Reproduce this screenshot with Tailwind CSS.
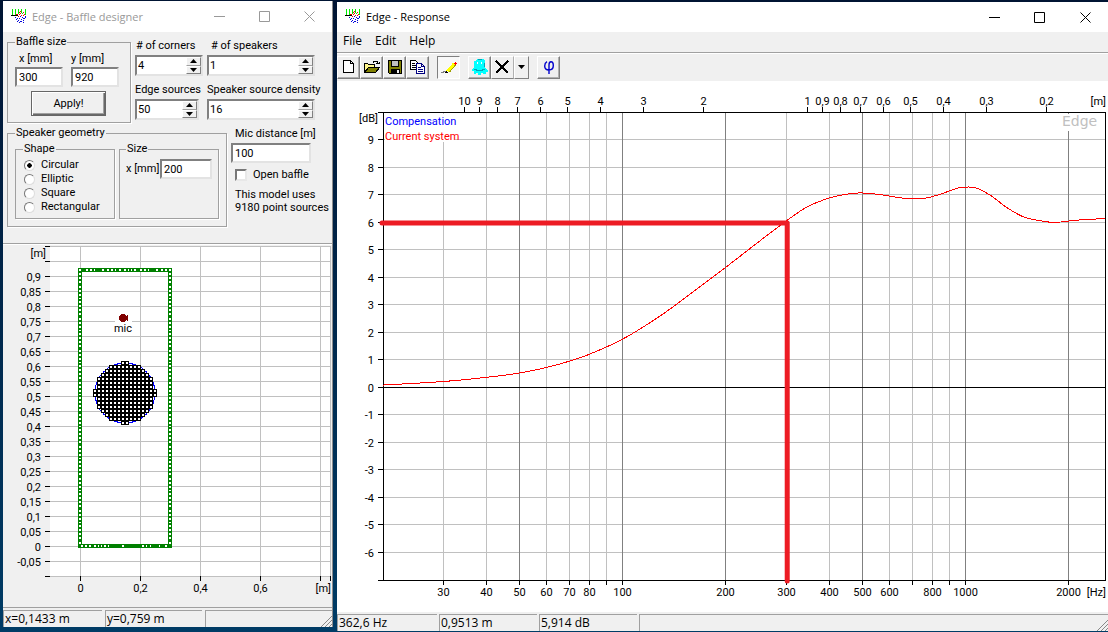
<!DOCTYPE html>
<html lang="en">
<head>
    <meta charset="UTF-8">
    <meta name="viewport" content="width=device-width, initial-scale=1.0">
    <title>Edge</title>
    <script src="https://cdn.jsdelivr.net/npm/@tailwindcss/browser@4"></script>
</head>
<body class="min-h-screen flex gap-1 pl-[3px] bg-linear-to-b from-[#001433] to-[#003c66] font-[Roboto,'Liberation_Sans',sans-serif] text-[11px] leading-[14px] text-black">

    <!-- Baffle designer -->
    <section class="w-[330px] shrink-0 mt-px mb-[5px] flex flex-col bg-[#f0f0f0] border-r border-[#8c8c8c]">
        <header class="h-[31px] flex items-center bg-white text-[#999] pl-2">
            <svg class="app-icon w-4 h-4" viewBox="0 0 16 16" shape-rendering="crispEdges"></svg>
            <h1 class="ml-[5px] flex-1 font-['Open_Sans',sans-serif] text-[11px] leading-4">Edge - Baffle designer</h1>
            <button aria-label="Minimize" class="w-[45px] h-7 flex items-center justify-center"><svg class="w-[11px] h-[11px]" viewBox="0 0 11 11" stroke="currentColor" fill="none"><path d="M0 5.5h11"/></svg></button>
            <button aria-label="Maximize" class="w-[45px] h-7 flex items-center justify-center"><svg class="w-[11px] h-[11px]" viewBox="0 0 11 11" stroke="currentColor" fill="none"><path d="M.5.5h10v10H.5z"/></svg></button>
            <button aria-label="Close" class="w-[45px] h-7 flex items-center justify-center"><svg class="w-[11px] h-[11px]" viewBox="0 0 11 11" stroke="currentColor" fill="none"><path d="M.5.5l10 10M10.5.5l-10 10"/></svg></button>
        </header>

        <form class="pl-1 pb-4 border-b border-[#a0a0a0]" onsubmit="return false">
            <div class="flex">
                <fieldset class="w-[124px] h-[88px] mt-[3px] pl-[7px] border border-[#a0a0a0] shadow-[1px_1px_0_#fff]">
                    <legend class="bg-[#f0f0f0] px-px">Baffle size</legend>
                    <div class="flex gap-2 mt-[3px]">
                        <div class="w-12"><label for="bx" class="block pl-1">x [mm]</label><input id="bx" value="300" class="block w-12 h-5 mt-px px-0.5 bg-white border-2 border-t-[#808080] border-l-[#808080] border-b-[#e3e3e3] border-r-[#e3e3e3]"></div>
                        <div class="w-12"><label for="by" class="block">y [mm]</label><input id="by" value="920" class="block w-12 h-5 mt-px px-0.5 bg-white border-2 border-t-[#808080] border-l-[#808080] border-b-[#e3e3e3] border-r-[#e3e3e3]"></div>
                    </div>
                    <button class="block w-[75px] h-[25px] mt-1 ml-4 text-center border border-[#666] shadow-[inset_1px_1px_0_#fff,inset_-1px_-1px_0_#696969,inset_-2px_-2px_0_#a0a0a0]">Apply!</button>
                </fieldset>
                <div class="ml-1 mt-[7px] w-[72px]">
                    <label for="corners" class="block pl-px whitespace-nowrap"># of corners</label>
                    <div class="flex w-[68px] h-[21px] mt-0.5 bg-white border-2 border-t-[#808080] border-l-[#808080] border-b-[#e3e3e3] border-r-[#e3e3e3]">
                        <input id="corners" value="4" class="flex-1 min-w-0 h-4 pl-px">
                        <span class="spin w-[15px] flex flex-col"></span>
                    </div>
                    <label for="sources" class="block mt-[7px] whitespace-nowrap">Edge sources</label>
                    <div class="flex w-16 h-[21px] mt-0.5 bg-white border-2 border-t-[#808080] border-l-[#808080] border-b-[#e3e3e3] border-r-[#e3e3e3]">
                        <input id="sources" value="50" class="flex-1 min-w-0 h-4 pl-px">
                        <span class="spin w-[15px] flex flex-col"></span>
                    </div>
                </div>
                <div class="mt-[7px]">
                    <label for="speakers" class="block pl-1 whitespace-nowrap"># of speakers</label>
                    <div class="flex w-[108px] h-[21px] mt-0.5 bg-white border-2 border-t-[#808080] border-l-[#808080] border-b-[#e3e3e3] border-r-[#e3e3e3]">
                        <input id="speakers" value="1" class="flex-1 min-w-0 h-4 pl-px">
                        <span class="spin w-[15px] flex flex-col"></span>
                    </div>
                    <label for="density" class="block mt-[7px] whitespace-nowrap">Speaker source density</label>
                    <div class="flex w-[108px] h-[21px] mt-0.5 bg-white border-2 border-t-[#808080] border-l-[#808080] border-b-[#e3e3e3] border-r-[#e3e3e3]">
                        <input id="density" value="16" class="flex-1 min-w-0 h-4 pl-px">
                        <span class="spin w-[15px] flex flex-col"></span>
                    </div>
                </div>
            </div>

            <div class="flex mt-[3px]">
                <fieldset class="w-[220px] h-[101px] pl-[7px] border border-[#a0a0a0] shadow-[1px_1px_0_#fff]">
                    <legend class="bg-[#f0f0f0] px-px">Speaker geometry</legend>
                    <div class="flex gap-1 mt-0.5">
                        <fieldset class="w-[100px] h-[77px] pl-2 border border-[#a0a0a0] shadow-[1px_1px_0_#fff]">
                            <legend class="bg-[#f0f0f0] px-px -ml-px">Shape</legend>
                            <label class="flex items-center h-3.5 mt-0.5"><input type="radio" name="shape" checked class="appearance-none w-[11px] h-[11px] mr-1.5 rounded-full bg-white border border-t-[#777] border-l-[#777] border-b-[#ddd] border-r-[#ddd] checked:bg-[radial-gradient(#000_2px,#fff_2.5px)]">Circular</label>
                            <label class="flex items-center h-3.5"><input type="radio" name="shape" class="appearance-none w-[11px] h-[11px] mr-1.5 rounded-full bg-white border border-t-[#777] border-l-[#777] border-b-[#ddd] border-r-[#ddd]">Elliptic</label>
                            <label class="flex items-center h-3.5"><input type="radio" name="shape" class="appearance-none w-[11px] h-[11px] mr-1.5 rounded-full bg-white border border-t-[#777] border-l-[#777] border-b-[#ddd] border-r-[#ddd]">Square</label>
                            <label class="flex items-center h-3.5"><input type="radio" name="shape" class="appearance-none w-[11px] h-[11px] mr-1.5 rounded-full bg-white border border-t-[#777] border-l-[#777] border-b-[#ddd] border-r-[#ddd]">Rectangular</label>
                        </fieldset>
                        <fieldset class="w-[100px] h-[77px] pl-1.5 border border-[#a0a0a0] shadow-[1px_1px_0_#fff]">
                            <legend class="bg-[#f0f0f0] px-px">Size</legend>
                            <div class="flex items-center mt-[3px]">
                                <label for="size" class="w-[34px] whitespace-nowrap">x [mm]</label>
                                <input id="size" value="200" class="w-[52px] h-5 px-0.5 bg-white border-2 border-t-[#808080] border-l-[#808080] border-b-[#e3e3e3] border-r-[#e3e3e3]">
                            </div>
                        </fieldset>
                    </div>
                </fieldset>
                <div class="ml-1 mt-px">
                    <label for="mic" class="block pl-1 whitespace-nowrap">Mic distance [m]</label>
                    <input id="mic" value="100" class="block w-20 h-5 mt-0.5 px-0.5 bg-white border-2 border-t-[#808080] border-l-[#808080] border-b-[#e3e3e3] border-r-[#e3e3e3]">
                    <label class="flex items-center h-3.5 mt-[5px] pl-1"><input type="checkbox" class="appearance-none w-3 h-3 mr-1.5 bg-white border-2 border-t-[#777] border-l-[#777] border-b-[#e8e8e8] border-r-[#e8e8e8]">Open baffle</label>
                    <p class="mt-1.5 pl-1 leading-[13px] whitespace-nowrap">This model uses<br>9180 point sources</p>
                </div>
            </div>
        </form>

        <div class="flex-1 min-h-[360px] border-t border-white overflow-hidden">
            <svg id="baffle" class="block w-full h-[361px]" font-size="11" shape-rendering="crispEdges"></svg>
        </div>

        <footer class="h-5 flex gap-[3px] pt-0.5 border-t border-[#a0a0a0] font-['Open_Sans',sans-serif] text-xs leading-[15px]">
            <span class="w-[99px] pl-px border-t border-l border-[#a0a0a0]">x=0,1433 m</span>
            <span class="w-[97px] pl-px border-t border-l border-[#a0a0a0]">y=0,759 m</span>
            <span class="flex-1 flex justify-end items-end border-t border-l border-[#a0a0a0]"><svg class="w-3 h-3" viewBox="0 0 12 12" stroke="#888"><path d="M1 12L12 1M5 12l7-7M9 12l3-3"/></svg></span>
        </footer>
    </section>

    <!-- Response -->
    <section class="flex-1 min-w-0 mt-0.5 mb-px flex flex-col bg-[#f0f0f0]">
        <header class="h-[30px] flex items-center bg-white pl-2">
            <svg class="app-icon w-4 h-4" viewBox="0 0 16 16" shape-rendering="crispEdges"></svg>
            <h1 class="ml-[5px] flex-1 font-['Open_Sans',sans-serif] text-[11px] leading-4">Edge - Response</h1>
            <button aria-label="Minimize" class="w-[45px] h-7 flex items-center justify-center"><svg class="w-[11px] h-[11px]" viewBox="0 0 11 11" stroke="currentColor" fill="none"><path d="M0 5.5h11"/></svg></button>
            <button aria-label="Maximize" class="w-[45px] h-7 flex items-center justify-center"><svg class="w-[11px] h-[11px]" viewBox="0 0 11 11" stroke="currentColor" fill="none"><path d="M.5.5h10v10H.5z"/></svg></button>
            <button aria-label="Close" class="w-[46px] h-7 flex items-center justify-center"><svg class="w-[11px] h-[11px]" viewBox="0 0 11 11" stroke="currentColor" fill="none"><path d="M.5.5l10 10M10.5.5l-10 10"/></svg></button>
        </header>
        <nav class="h-[21px] flex items-center gap-[13px] pb-0.5 pl-1.5 border-b border-[#a0a0a0] font-['Open_Sans',sans-serif] text-xs leading-4">
            <button>File</button><button>Edit</button><button>Help</button>
        </nav>
        <div class="h-7 flex items-center pb-px border-t border-white">
            <button aria-label="New" class="w-[23px] h-[23px] flex items-center justify-center border border-t-white border-l-white border-b-[#808080] border-r-[#808080] shadow-[inset_-1px_-1px_0_#b0b0b0]">
                <svg class="w-4 h-4" viewBox="0 0 16 16" shape-rendering="crispEdges"><path fill="#fff" stroke="#000" d="M2.500 1.500h7l3 3v9h-10z"/><path fill="none" stroke="#000" d="M9.500 1.500v3h3"/></svg>
            </button>
            <button aria-label="Open" class="w-[23px] h-[23px] flex items-center justify-center border border-t-white border-l-white border-b-[#808080] border-r-[#808080] shadow-[inset_-1px_-1px_0_#b0b0b0]">
                <svg class="w-4 h-4" viewBox="0 0 16 16" shape-rendering="crispEdges"><path fill="#fff68a" stroke="#000" d="M.5 13.500v-9h3l1 1h6v3h-6z"/><path fill="#808000" stroke="#000" d="M.5 13.500l4-5h11l-4 5z"/><path fill="none" stroke="#000" d="M9 3.500l1-1h3l1.500 2M12 4.500h3v-2"/></svg>
            </button>
            <button aria-label="Save" class="w-[23px] h-[23px] flex items-center justify-center border border-t-white border-l-white border-b-[#808080] border-r-[#808080] shadow-[inset_-1px_-1px_0_#b0b0b0]">
                <svg class="w-4 h-4" viewBox="0 0 16 16" shape-rendering="crispEdges"><path fill="#808000" stroke="#000" d="M1.500 1.500h13v13h-12l-1-1z"/><path fill="#c0c0c0" stroke="#000" d="M4.500 1.500h7v6h-7z"/><path d="M4 10h9v4H4z"/><path fill="#f0f0f0" d="M10 11h2v3h-2z"/></svg>
            </button>
            <button aria-label="Copy" class="w-[23px] h-[23px] flex items-center justify-center border border-t-white border-l-white border-b-[#808080] border-r-[#808080] shadow-[inset_-1px_-1px_0_#b0b0b0]">
                <svg class="w-4 h-4" viewBox="0 0 16 16" shape-rendering="crispEdges" fill="#fff"><path stroke="#000" d="M.5 1.500h5l3 3v6h-8z"/><path stroke="#000" d="M2 4.500h3M2 6.500h4M2 8.500h4"/><path stroke="#000080" d="M6.500 4.500h5l3 3v7h-8zM11.500 4.500v3h3M8 8.500h3M8 10.500h5M8 12.500h5"/></svg>
            </button>
            <button aria-label="Draw" class="ml-2 w-[23px] h-[23px] flex items-center justify-center bg-[#f8f8f8] border border-t-[#808080] border-l-[#808080] border-b-white border-r-white">
                <svg class="w-[18px] h-4" viewBox="0 0 18 16" shape-rendering="crispEdges" fill="none"><path stroke="#808080" d="M1 13.500h2v-1h3"/><path stroke="#ff0" stroke-width="3" d="M7.500 12.500l7-8"/><path stroke="#a0a000" d="M9.500 13l6-7"/><path fill="#000" d="M5 13h3v1H5zM6 12h1v1H6z"/><path fill="red" d="M15 3h1v1h1v1h-1v1h-1V5h-1V4h1z"/></svg>
            </button>
            <button aria-label="Ghost" class="ml-2 w-[23px] h-[23px] flex items-center justify-center border border-t-white border-l-white border-b-[#808080] border-r-[#808080] shadow-[inset_-1px_-1px_0_#b0b0b0]">
                <svg class="w-[18px] h-[18px]" viewBox="0 0 18 18" shape-rendering="crispEdges"><path fill="#0ff" d="M6 1h6l2 2v7l3 2v2h-2v2h-3v-1h-2v2H7v-2H5v1H3v-3H1v-2l2-2V3h2z"/><path fill="#fff" d="M6 4h1v2H6zM10 4h1v2h-1z"/><path fill="none" stroke="#00a6b8" d="M3 11.500h2l1 1h5l1-1h2M7 1.500h4M13.500 5v4"/></svg>
            </button>
            <button aria-label="Delete" class="w-[23px] h-[23px] flex items-center justify-center border border-t-white border-l-white border-b-[#808080] border-r-[#b0b0b0]">
                <svg class="w-4 h-4" viewBox="0 0 16 16" shape-rendering="crispEdges" stroke="#000" fill="none"><path stroke-width="2" d="M1 2l12 12M13 2L1 14"/></svg>
            </button>
            <button aria-label="Delete options" class="w-[15px] h-[23px] flex items-center justify-center border border-t-white border-l-white border-b-[#808080] border-r-[#808080]">
                <svg class="w-[7px] h-1" viewBox="0 0 7 4"><path d="M0 0h7L3.500 4z"/></svg>
            </button>
            <button aria-label="Phase" class="ml-2 w-[23px] h-[23px] flex items-center justify-center border border-t-white border-l-white border-b-[#808080] border-r-[#808080] shadow-[inset_-1px_-1px_0_#b0b0b0]">
                <svg class="w-[10px] h-[13px]" viewBox="0 0 10 13" fill="none" stroke="#00c" stroke-width="1.400"><path d="M3 .7C1.500 1.500.7 3 .7 5c0 2.500 1.500 4 4.300 4s4.300-1.500 4.300-4.500C9.300 2 8.500.7 7 .7S5 2 5 4v9"/></svg>
            </button>
        </div>

        <div class="flex-1 min-h-[400px] bg-white overflow-hidden">
            <svg id="response" class="block w-full h-[531px]" font-size="11" shape-rendering="crispEdges"></svg>
        </div>

        <footer class="h-[19px] flex gap-0.5 pt-0.5 font-['Open_Sans',sans-serif] text-xs leading-4">
            <span class="w-[100px] pl-px border-t border-l border-[#a0a0a0]">362,6 Hz</span>
            <span class="w-[98px] pl-px border-t border-l border-[#a0a0a0]">0,9513 m</span>
            <span class="w-[98px] pl-px border-t border-l border-[#a0a0a0]">5,914 dB</span>
            <span class="flex-1 flex justify-end items-end border-t border-l border-[#a0a0a0]"><svg class="w-3 h-3" viewBox="0 0 12 12" stroke="#888"><path d="M1 12L12 1M5 12l7-7M9 12l3-3"/></svg></span>
        </footer>
    </section>

    <script>
        // Title bar icons
        document.querySelectorAll('.app-icon').forEach(icon => {
            icon.innerHTML = `
                <path fill="#0e0" d="M1 0h1v6H1zM4 0h1v6H4zM5 5h1v1H5zM7 0h1v5H7zM10 0h1v4h-1zM11 4h1v1h-1zM14 0h1v6h-1z"/>
                <path fill="#000" d="M0 6h7v1H0z"/>
                <path fill="#e00" d="M5 5h2v1H5zM8 3h1v1H8zM8 5h1v1H8zM9 2h1v1H9zM9 4h1v1H9zM12 3h1v1h-1zM10 6h1v1h-1zM13 5h1v1h-1zM7 7h1v1H7zM12 6h1v1h-1z"/>
                <path fill="#00d" d="M4 8h1v1H4zM6 9h1v1H6zM5 10h1v1H5zM8 9h1v1H8zM7 11h1v1H7zM9 12h2v1H9zM8 13h1v1H8zM10 10h1v1h-1zM12 11h1v1h-1zM11 8h1v1h-1zM13 9h1v1h-1zM14 7h1v2h-1zM12 13h1v1h-1zM9 7h1v1H9zM12 9h1v1h-1zM6 12h1v1H6z"/>`;
        });

        // Up / down buttons of the number boxes
        document.querySelectorAll('.spin').forEach(spin => {
            spin.innerHTML = `
                <button aria-label="Up" class="flex-1 flex items-center justify-center bg-[#f0f0f0] border border-t-white border-l-white border-b-[#a0a0a0] border-r-[#808080]"><svg class="w-[7px] h-1" viewBox="0 0 7 4"><path d="M0 4h7L3.500 0z"/></svg></button>
                <button aria-label="Down" class="flex-1 flex items-center justify-center bg-[#f0f0f0] border border-t-white border-l-white border-b-[#808080] border-r-[#808080]"><svg class="w-[7px] h-1" viewBox="0 0 7 4"><path d="M0 0h7L3.500 4z"/></svg></button>`;
        });

        const fmt = v => String(v).replace('.', ',');
        const line = (x1, y1, x2, y2, color) => `<path d="M${x1} ${y1}L${x2} ${y2}" stroke="${color}" fill="none"/>`;
        const text = (x, y, s, anchor = 'middle', color = '#000') => `<text x="${x}" y="${y}" text-anchor="${anchor}" fill="${color}">${s}</text>`;
        const snap = v => Math.floor(v + 0.001) + 0.5;

        function drawBaffle() {
            const svg = document.getElementById('baffle');
            const w = svg.clientWidth, left = 47, top = 1, bottom = 331, right = w - 1;
            const X = m => left + 30 + m * 300;
            const Y = m => top + (1 - m) * 300;
            let out = `<rect x="${left}" y="${top}" width="${right - left}" height="${bottom - top}" fill="#fff"/>`;
            for (let i = -2; i <= 20; i++) {
                const y = snap(Y(i * 0.05));
                out += line(left, y, right, y, '#c0c0c0') + line(left - 5, y, left, y, '#000');
                if (i > -2 && i < 19) out += text(left - 9, y + 4, fmt(+(i * 0.05).toFixed(2)), 'end');
            }
            for (let m = 0; X(m) < right; m += 0.2) {
                const x = snap(X(m));
                out += line(x, top, x, bottom, '#c0c0c0') + line(x, bottom, x, bottom + 5, '#000');
                if (X(m) < right - 20) out += text(x, bottom + 16, fmt(+m.toFixed(1)));
            }
            out += line(right - 0.5, top, right - 0.5, bottom, '#c0c0c0') + line(right - 0.5, bottom, right - 0.5, bottom + 5, '#000');
            out += text(left - 4, top + 11, '[m]', 'end') + text(right, bottom + 16, '[m]', 'end');

            // Baffle outline with its edge sources
            const x0 = X(0), x1 = X(0.3), y0 = Y(0), y1 = Y(0.92);
            out += `<path d="M${x0} ${y1}H${x1}V${y0}H${x0}z" fill="none" stroke="#008000" stroke-width="4"/>`;
            const side = '2 2 2 2 2 2 2 3 2 2 2 2 2 2 1 2';
            out += `<path d="M${x0} ${y1 - 1}V${y0}M${x1} ${y1 - 1}V${y0}" stroke="#fff" stroke-width="2" stroke-dasharray="${side}"/>`;
            out += `<path d="M${x0 + 6} ${y1}H${x1}" stroke="#fff" stroke-width="2" stroke-dasharray="2 2 2 2 1 7 2 3 2 2 2 2 1 3 2 3 2 2 1 2 1 2 2 4"/>`;
            out += `<path d="M${x0 + 1} ${y0}H${x1}" stroke="#fff" stroke-width="2" stroke-dasharray="2 2 2 2 2 3 2 2 1 2 1 2 2 2 1 13 2 18 2 2 1 3 1 8 1 5 2 4"/>`;

            // Speaker: 16 rows of point sources
            const cx = X(0.15), cy = top + 147;
            out += `<circle cx="${cx}" cy="${cy}" r="30" fill="#fff" stroke="#00f"/>`;
            [2, 8, 10, 12, 14, 14, 14, 16, 16, 14, 14, 14, 12, 10, 8, 2].forEach((n, row) => {
                for (let i = 0; i < n; i++) {
                    const x = cx - n * 2 + i * 4, y = cy - 32 + row * 4;
                    out += `<rect x="${x}" y="${y}" width="4" height="4"/><rect x="${x + 1}" y="${y + 1}" width="2" height="2" fill="#fff"/>`;
                }
            });

            // Microphone
            const mx = Math.round(X(0.1433)), my = Math.round(Y(0.759));
            out += `<rect x="${mx - 8}" y="${my + 3}" width="17" height="14" fill="#fff"/>`;
            out += `<path d="M${mx - 4} ${my - 2}h1v-1h1v-1h4v1h1v1h1v-1h1v6h-1v-1h-1v1h-1v1h-4v-1h-1v-1h-1z" fill="#800000"/>`;
            out += text(mx, my + 14, 'mic');
            svg.innerHTML = out;
        }

        // Simulated response, [Hz, dB]
        const response = [
            [20, 0.08], [30, 0.21], [40, 0.36], [50, 0.52], [60, 0.72], [70, 0.95], [80, 1.2], [100, 1.75],
            [129, 2.6], [168, 3.65], [200, 4.36], [252, 5.33], [303, 6.08], [345, 6.55], [399, 6.87], [446, 7.01],
            [493, 7.06], [564, 7.0], [667, 6.86], [754, 6.86], [844, 7.01], [954, 7.24], [1067, 7.25], [1180, 6.98],
            [1320, 6.53], [1476, 6.19], [1651, 6.05], [1826, 5.99], [2112, 6.07], [2552, 6.13],
        ];

        function drawResponse() {
            const svg = document.getElementById('response');
            const w = svg.clientWidth, left = 46, right = w - 3, top = 31, bottom = 499;
            const X = hz => left + (right - left) * Math.log(hz / 20) / Math.log(2552 / 20);
            const Y = db => top + (10 - db) * (bottom - top) / 17;
            let out = '';
            for (let db = -6; db <= 9; db++) {
                const y = snap(Y(db));
                out += line(left, y, right, y, db === 0 ? '#000' : '#c0c0c0') + line(left - 5, y, left, y, '#000');
                out += text(left - 9, y + 4, db, 'end');
            }
            const freqs = [30, 40, 50, 60, 70, 80, 90, 100, 200, 300, 400, 500, 600, 700, 800, 900, 1000, 2000];
            freqs.forEach(hz => {
                const x = snap(X(hz));
                const dark = [50, 100, 200, 500, 1000, 2000].includes(hz);
                out += line(x, top, x, bottom, dark ? '#808080' : '#c0c0c0') + line(x, bottom, x, bottom + 5, '#000');
                if (![90, 700, 900].includes(hz)) out += text(x, bottom + 16, hz);
            });
            // Wavelength axis
            [10, 9, 8, 7, 6, 5, 4, 3, 2, 1, 0.9, 0.8, 0.7, 0.6, 0.5, 0.4, 0.3, 0.2].forEach(m => {
                const x = snap(X(345 / m));
                out += line(x, top - 5, x, top, '#000') + text(x, top - 7, fmt(m));
            });
            out += line(left, snap(Y(0)), right, snap(Y(0)), '#000');
            out += `<path d="M${left - 5} ${top + 0.5}H${right + 0.5}V${bottom + 0.5}H${left - 5}M${left + 0.5} ${top}V${bottom}" fill="none" stroke="#000"/>`;

            // Legend and watermark
            out += `<rect x="${left + 2}" y="${top + 2}" width="70" height="28" fill="#fff"/>`;
            out += text(left + 2, top + 13, 'Compensation', 'start', '#00f') + text(left + 2, top + 28, 'Current system', 'start', '#f00');
            out += `<rect x="${right - 44}" y="${top + 2}" width="38" height="17" fill="#fff"/>`;
            out += `<text x="${right - 43}" y="${top + 14}" fill="#c0c0c0" font-size="14" font-family="DejaVu Sans">Edge</text>`;
            out += text(left - 5, top + 10, '[dB]', 'end') + text(right + 1, top - 7, '[m]', 'end') + text(right + 1, bottom + 16, '[Hz]', 'end');

            // Smooth curve through the points
            const p = response.map(([hz, db]) => [X(hz), Y(db)]);
            let d = `M${p[0]}`;
            for (let i = 0; i < p.length - 1; i++) {
                const a = p[i - 1] || p[i], b = p[i], c = p[i + 1], e = p[i + 2] || c;
                d += `C${b[0] + (c[0] - a[0]) / 6},${b[1] + (c[1] - a[1]) / 6} ${c[0] - (e[0] - b[0]) / 6},${c[1] - (e[1] - b[1]) / 6} ${c}`;
            }
            out += `<path d="${d}" fill="none" stroke="#f00"/>`;
            out += `<path d="M${left - 1} ${Y(6) + 1}H${X(302)}V${bottom + 1}" fill="none" stroke="#ed1c24" stroke-width="5" stroke-linecap="round" stroke-linejoin="round" shape-rendering="auto"/>`;
            svg.innerHTML = out;
        }

        function draw() {
            drawBaffle();
            drawResponse();
        }
        draw();

        // Redraw when the charts change size
        const observer = new ResizeObserver(draw);
        observer.observe(document.getElementById('baffle').parentElement);
        observer.observe(document.getElementById('response').parentElement);
        window.addEventListener('load', draw);
    </script>
</body>
</html>
